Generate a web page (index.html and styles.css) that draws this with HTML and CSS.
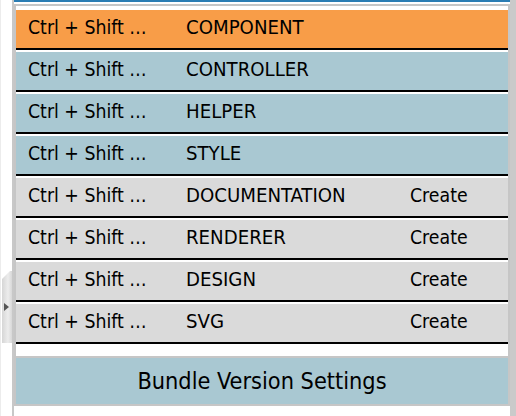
FILE: index.html
```html
<!DOCTYPE html>
<html>
<head>
<meta charset="utf-8">
<link rel="stylesheet" href="styles.css">
</head>
<body>
<div class="app">
  <div class="side">
    <div class="handle"><span class="arrow"></span></div>
  </div>
  <div class="main">
    <div class="topbar"></div>
    <div class="list">
      <div class="row active"><span class="key">Ctrl + Shift …</span><span class="name">COMPONENT</span><span class="act"></span></div>
      <div class="row exists"><span class="key">Ctrl + Shift …</span><span class="name">CONTROLLER</span><span class="act"></span></div>
      <div class="row exists"><span class="key">Ctrl + Shift …</span><span class="name">HELPER</span><span class="act"></span></div>
      <div class="row exists"><span class="key">Ctrl + Shift …</span><span class="name">STYLE</span><span class="act"></span></div>
      <div class="row missing"><span class="key">Ctrl + Shift …</span><span class="name">DOCUMENTATION</span><span class="act">Create</span></div>
      <div class="row missing"><span class="key">Ctrl + Shift …</span><span class="name">RENDERER</span><span class="act">Create</span></div>
      <div class="row missing"><span class="key">Ctrl + Shift …</span><span class="name">DESIGN</span><span class="act">Create</span></div>
      <div class="row missing"><span class="key">Ctrl + Shift …</span><span class="name">SVG</span><span class="act">Create</span></div>
    </div>
    <div class="bundle">Bundle Version Settings</div>
  </div>
  <div class="scrollbar"></div>
</div>
</body>
</html>
```
FILE: styles.css
```css
html, body {
  margin: 0;
  padding: 0;
  background: #ffffff;
}
body {
  font-family: "DejaVu Sans Condensed", "DejaVu Sans", sans-serif;
  font-stretch: condensed;
  color: #000;
}
.app {
  display: flex;
  height: 416px;
  overflow: hidden;
}
.side {
  width: 12px;
  flex: none;
  display: flex;
  flex-direction: column;
  box-sizing: border-box;
  border-left: 1px solid #ececec;
}
.handle {
  margin-top: 271px;
  margin-left: 1px;
  width: 10px;
  height: 72px;
  background: linear-gradient(to right, #d6d6d6, #ececec 60%, #d8d8d8);
  display: flex;
  align-items: center;
  clip-path: polygon(0 8px, 8px 0, 100% 0, 100% 100%, 0 100%);
}
.arrow {
  width: 0;
  height: 0;
  margin-left: 2px;
  border-top: 4px solid transparent;
  border-bottom: 4px solid transparent;
  border-left: 5px solid #555;
}
.main {
  width: 498px;
  flex: none;
  border-left: 2px solid #c8c8c8;
  box-sizing: border-box;
}
.topbar {
  height: 2px;
  background: #2b7db3;
  margin-bottom: 2px;
}
.list {
  border: 2px solid #c6c6c6;
  border-bottom: none;
  padding: 4px 0 10px;
}
.row {
  display: grid;
  grid-template-columns: 158px 224px 1fr;
  align-items: center;
  height: 34px;
  padding-bottom: 4px;
  padding-left: 12px;
  border-bottom: 2px solid #000;
  margin-bottom: 2px;
  font-size: 19.3px;
}
.name {
  font-size: 20.2px;
}
.row.active { background: #f89d48; }
.row.exists { background: #a9c8d2; }
.row.missing { background: #dadada; }
.bundle {
  border: 2px solid #c6c6c6;
  background: #a9c8d2;
  height: 44px;
  padding-bottom: 2px;
  display: flex;
  align-items: center;
  justify-content: center;
  font-size: 23.3px;
}
.scrollbar {
  flex: 1;
  background: #cacaca;
}
```
